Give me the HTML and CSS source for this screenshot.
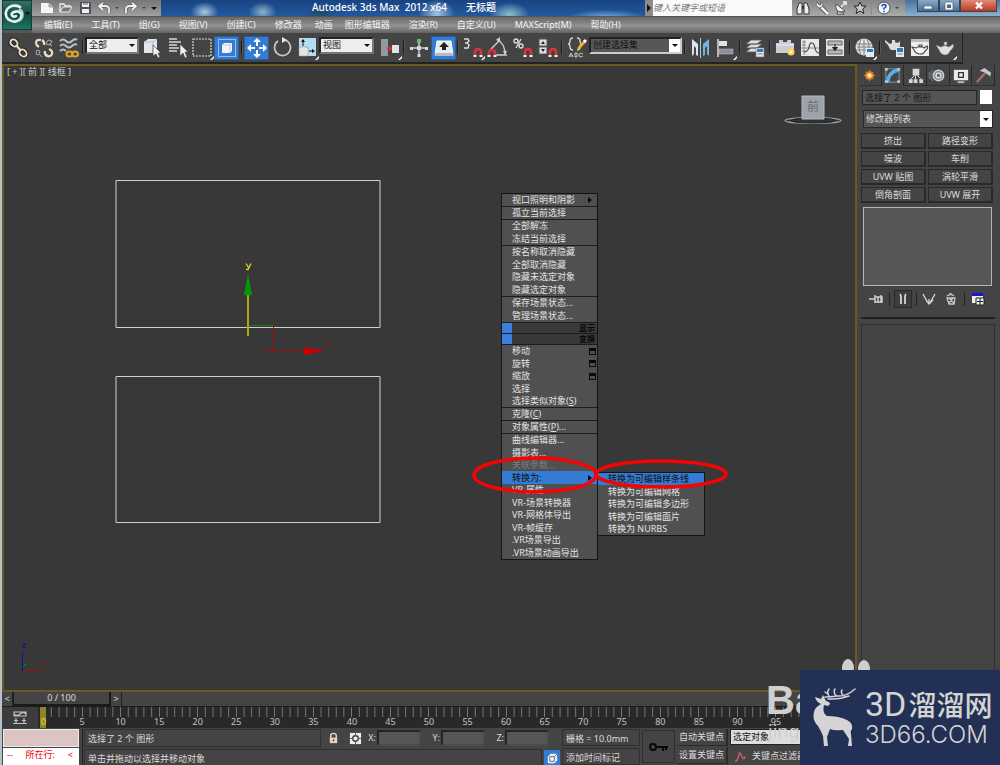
FILE: index.html
```html
<!DOCTYPE html>
<html lang="zh-CN">
<head>
<meta charset="utf-8">
<title>Autodesk 3ds Max 2012 x64 无标题</title>
<link rel="stylesheet" href="styles.css">
</head>
<body>
<div class="app">
  <header class="header">
    <button class="app-button" aria-label="应用程序">
      <svg width="30" height="30" viewBox="0 0 30 30"><path d="M18 7C9 3 3 9 4 15s10 9 14 4-1-9-6-7-1 6 2 4" fill="none" stroke="#e8f4ef" stroke-width="2.600" stroke-linecap="round"/><path d="M17 9c5 2 5 9 0 12" fill="none" stroke="#b9d8cf" stroke-width="2"/><path d="M23 12h5l-2.500 3z" fill="#111"/></svg>
    </button>
    <div class="title-row">
      <div class="quick">
        <button aria-label="新建"><svg width="14" height="12" viewBox="0 0 14 12"><path d="M1 1h8l4 4v6H1z" fill="#f4f4f4"/><path d="M9 1v4h4" fill="#bbb" stroke="#777" stroke-width=".6"/></svg></button>
        <button aria-label="打开"><svg width="14" height="12" viewBox="0 0 14 12"><path d="M1 10V2h4l1 2h5v2" fill="none" stroke="#eee" stroke-width="1.300"/><path d="M1 10l3-5h9l-3 5z" fill="#777" stroke="#eee"/></svg></button>
        <button aria-label="保存"><svg width="14" height="12" viewBox="0 0 14 12"><path d="M2 0h10l1 1v11H2z" fill="#4d5359"/><path d="M4 1h7v4H4zM4 7h7v4H4z" fill="#f1f1f1"/><path d="M5 2h5" stroke="#667"/></svg></button>
        <button class="wide" aria-label="撤消"><svg width="14" height="12" viewBox="0 0 14 12"><path d="M12 11V7q0-3-4-3H3M6 1L2 4l4 4" fill="none" stroke="#555" stroke-width="3"/><path d="M12 11V7q0-3-4-3H3M6 1L2 4l4 4" fill="none" stroke="#f2f2f2" stroke-width="1.800"/></svg><i class="caret dim"></i></button>
        <button class="wide" aria-label="重做"><svg width="14" height="12" viewBox="0 0 14 12"><path d="M2 11V7q0-3 4-3h5M8 1l4 3-4 4" fill="none" stroke="#555" stroke-width="3"/><path d="M2 11V7q0-3 4-3h5M8 1l4 3-4 4" fill="none" stroke="#f2f2f2" stroke-width="1.800"/></svg><i class="caret dim"></i></button>
        <button class="more" aria-label="自定义"><i class="caret"></i></button>
      </div>
      <h1 class="title"><span>Autodesk 3ds Max&nbsp; 2012 x64</span><span>无标题</span></h1>
      <div class="search"><button aria-label="展开"><svg width="8" height="10" viewBox="0 0 8 10"><path d="M2 1l4 4-4 4z" fill="#111"/></svg></button><input type="search" aria-label="搜索" placeholder="键入关键字或短语"></div>
      <div class="info">
        <button aria-label="查找"><svg width="14" height="14" viewBox="0 0 14 14"><path d="M3 2h3v11H1V8zM8 2h3l2 6v5H8z" fill="#eee" stroke="#333"/><path d="M6 5h2v3H6z" fill="#333"/></svg></button>
        <button aria-label="工具"><svg width="14" height="14" viewBox="0 0 14 14"><path d="M5 5l7 7" stroke="#333" stroke-width="4"/><path d="M5 5l7 7" stroke="#f5f5f5" stroke-width="2.600" stroke-linecap="round"/><path d="M2 1L1 4l3 3 3-1 1-3-2-2v3H4z" fill="#f5f5f5" stroke="#444" stroke-width=".6"/></svg></button>
        <button aria-label="通讯"><svg width="14" height="14" viewBox="0 0 14 14"><path d="M2 3l9 7q-6 3-8-1-2-3-1-6zM4 10l-1 3h7l-2-3" fill="#f0f0f0" stroke="#333" stroke-width=".8"/><path d="M7 6l4-4M9 1h3v3" stroke="#f0f0f0" stroke-width="1.500" fill="none"/></svg></button>
        <button aria-label="收藏"><svg width="14" height="14" viewBox="0 0 14 14"><path d="M7 1l1.800 4H13L9.700 8l1.200 4.500L7 10l-3.900 2.500L4.300 8 1 5h4.200z" fill="#ccc" stroke="#222"/></svg></button>
        <button class="help" aria-label="帮助"><svg width="14" height="14" viewBox="0 0 14 14"><circle cx="7" cy="7" r="6" fill="#f6f6f6" stroke="#456"/><path d="M5 5.500q0-2 2-2t2 1.700q0 1.200-2 2V8.500M7 9.800v1.400" stroke="#1745b5" stroke-width="1.500" fill="none"/></svg><i class="caret dim"></i></button>
      </div>
      <div class="window-buttons">
        <button aria-label="最小化"><svg width="12" height="8" viewBox="0 0 12 8"><path d="M2 4h8v3H2z" fill="#fff" stroke="#456" stroke-width=".6"/></svg></button><button aria-label="还原"><svg width="12" height="10" viewBox="0 0 12 10"><path d="M2 1h8v8H2z" fill="#f4f4f4" stroke="#456" stroke-width=".6"/><path d="M4.500 4h3v2.500h-3z" fill="#5b7a9c" stroke="#456"/></svg></button><button class="close" aria-label="关闭"><svg width="12" height="10" viewBox="0 0 12 10"><path d="M3 1.500l6 6M9 1.500l-6 6" stroke="#fff" stroke-width="2.400"/></svg></button>
      </div>
    </div>
    <nav class="menubar">
      <button>编辑(E)</button><button>工具(T)</button><button>组(G)</button><button>视图(V)</button><button>创建(C)</button><button>修改器</button><button class="near">动画</button><button class="near">图形编辑器</button><button>渲染(R)</button><button>自定义(U)</button><button>MAXScript(M)</button><button>帮助(H)</button>
    </nav>
  </header>

  <div class="toolbar">
    <button aria-label="选择并链接"><svg viewBox="0 0 24 24"><g fill="none" stroke="#222" stroke-width="4"><ellipse cx="7" cy="7" rx="4" ry="3" transform="rotate(45 7 7)"/><ellipse cx="16" cy="17" rx="4" ry="3" transform="rotate(45 16 17)"/></g><g fill="none" stroke="#e9dcc0" stroke-width="2"><ellipse cx="7" cy="7" rx="4" ry="3" transform="rotate(45 7 7)"/><ellipse cx="16" cy="17" rx="4" ry="3" transform="rotate(45 16 17)"/><path d="M9 9l5 6"/></g></svg></button>
    <button aria-label="断开链接"><svg viewBox="0 0 24 24"><g fill="none" stroke="#e9dcc0" stroke-width="2.200"><path d="M9 4q-5-1-5 3 0 2 3 4M12 9q1-3-2-5M14 19q4 3 6-1 1-3-3-5M13 15q-1 3 2 5"/></g><g stroke="#aaa" fill="none"><path d="M14 8l2-4 4 1-2 4zM5 14l3 1-1 4-3-1zM17 8l3 2M8 19l2 2"/></g></svg></button>
    <button aria-label="绑定到空间扭曲"><svg viewBox="0 0 24 24"><path d="M3 5q3-3 6 0t6 0 5-1M3 10q3-3 6 0t6 0 5-1M3 15q3-3 6 0" fill="none" stroke="#b9c1c8" stroke-width="2"/><g fill="none" stroke="#e5a52a" stroke-width="2"><ellipse cx="12.500" cy="18" rx="3" ry="2.500"/><ellipse cx="18" cy="18" rx="3" ry="2.500"/></g></svg></button>
    <i class="sep"></i>
    <span class="select filter"><select aria-label="选择过滤器"><option>全部</option></select></span>
    <button aria-label="选择对象"><svg viewBox="0 0 24 24"><path d="M4 6l4-3h9v10l-4 4H4z" fill="#dfe5ea"/><path d="M4 6h9v11M13 6l4-3" fill="none" stroke="#b5bdc4"/><path d="M13 9v11l3-2 2 4 2-1-2-4h3z" fill="#f3f3f3" stroke="#444" stroke-width=".7"/></svg></button>
    <button aria-label="按名称选择"><svg viewBox="0 0 24 24"><path d="M4 3h8M4 6h12M4 9h8M4 12h10M4 15h8" stroke="#d5d9dc" stroke-width="1.500"/><path d="M15 8v12l3-3 2 5 2-1-2-5h3z" fill="#f0f0f0" stroke="#444" stroke-width=".6"/></svg></button>
    <button aria-label="矩形选择区域"><svg viewBox="0 0 24 24"><path d="M3 3h18v17H3z" fill="none" stroke="#ddd" stroke-width="1.200" stroke-dasharray="2 1"/><path d="M20 24l4-4v2l-2 2z" fill="#fff"/></svg></button>
    <button class="on" aria-label="窗口/交叉"><svg viewBox="0 0 24 24"><path d="M3.500 3.500h17v17h-17z" fill="none" stroke="#fff" stroke-dasharray="1 1"/><path d="M7 9l2-2h8v8l-2 2H7z" fill="#f2f4f8"/><path d="M7 9h8v8M15 9l2-2" stroke="#c4cbd6" fill="none"/></svg></button>
    <i class="sep"></i>
    <button class="on" aria-label="选择并移动"><svg viewBox="0 0 24 24"><path d="M12 2l4 4h-3v4h-2V6H8zM12 22l4-4h-3v-4h-2v4H8zM2 12l4-4v3h4v2H6v3zM22 12l-4-4v3h-4v2h4v3z" fill="#fff"/></svg></button>
    <button aria-label="选择并旋转"><svg viewBox="0 0 24 24"><path d="M8 5a8 8 0 1 0 7-1" fill="none" stroke="#c9c9c9" stroke-width="1.600"/><path d="M12 1v6l5-3z" fill="#e8e8e8"/></svg></button>
    <button aria-label="选择并缩放"><svg viewBox="0 0 24 24"><path d="M4 2h17v18H4z" fill="#b4dcf4"/><path d="M4 11h9v9H4z" fill="#e4e4e4" stroke="#999" stroke-width=".6"/><path d="M8 10V5" stroke="#111"/><path d="M6 6l2-3 2 3zM17 13l3 2-3 2z" fill="#111"/><path d="M14 15h4" stroke="#111"/><path d="M20 24l4-4v2l-2 2z" fill="#fff"/></svg></button>
    <span class="select coord"><select aria-label="参考坐标系"><option>视图</option></select></span>
    <button aria-label="使用轴点中心"><svg viewBox="0 0 24 24"><path d="M3 3h7v17H3z" fill="#8f99a5"/><path d="M14 9h7v8h-7z" fill="#dfe3e8"/><path d="M9 12.500h5M11.500 10v5" stroke="#e52a22" stroke-width="1.800"/><path d="M20 24l4-4v2l-2 2z" fill="#fff"/></svg></button>
    <i class="sep"></i>
    <button aria-label="选择并操纵"><svg viewBox="0 0 24 24"><path d="M12 5v15M4 12h16" stroke="#ccd" stroke-width="1.500"/><path d="M10 10h4v4h-4zM3 11h3v3H3zM18 11h3v3h-3zM10.500 18h3v3h-3z" fill="#d3d9df"/><path d="M10 3h4v4h-4z" fill="#70b870"/></svg></button>
    <button class="on" aria-label="键盘快捷键覆盖"><svg viewBox="0 0 24 24"><path d="M5 5h14l2 14H3z" fill="#e9ecef" stroke="#fff"/><path d="M3 17h18v3H3z" fill="#b6bcc2"/><path d="M12 6l5 5h-3v3h-4v-3H7z" fill="#222"/></svg></button>
    <i class="sep"></i>
    <button aria-label="捕捉开关"><svg viewBox="0 0 24 24"><path d="M3 3h4l1 2-2 2 2 2-1 3H3M4 7h3" fill="none" stroke="#ddd" stroke-width="1.400"/><g fill="none"><path d="M14 20v-4q0-3 3-3t3 3v4" stroke="#d9343b" stroke-width="2.600"/><path d="M12.500 20h3M18.500 20h3" stroke="#eee" stroke-width="2"/></g><path d="M20 24l4-4v2l-2 2z" fill="#fff"/></svg></button>
    <button aria-label="角度捕捉"><svg viewBox="0 0 24 24"><path d="M5 13L14 4M11 3q8 5 8 15M9 19h12" fill="none" stroke="#cfd2d5" stroke-width="1.400"/><path d="M10 4l4-3v5zM17 15l2 4 2-4z" fill="#cfd2d5"/><path d="M3 20v-3q0-3 3-3t3 3v3" fill="none" stroke="#d9343b" stroke-width="2.600"/><path d="M1.500 20h3M7.500 20h3" stroke="#eee" stroke-width="2"/></svg></button>
    <button aria-label="百分比捕捉"><svg viewBox="0 0 24 24"><circle cx="5" cy="5" r="2" fill="none" stroke="#ddd" stroke-width="1.400"/><circle cx="10" cy="10" r="2" fill="none" stroke="#ddd" stroke-width="1.400"/><path d="M10 3L5 12" stroke="#ddd" stroke-width="1.300"/><path d="M14 20v-4q0-3 3-3t3 3v4" fill="none" stroke="#d9343b" stroke-width="2.600"/><path d="M12.500 20h3M18.500 20h3" stroke="#eee" stroke-width="2"/></svg></button>
    <button aria-label="微调器捕捉"><svg viewBox="0 0 24 24"><path d="M3 3h8v7H3zM3 11h8v7H3z" fill="#dde" stroke="#555"/><path d="M5 8l2-3 2 3zM5 13l2 3 2-3z" fill="#222"/><path d="M14 20v-4q0-3 3-3t3 3v4" fill="none" stroke="#d9343b" stroke-width="2.600"/><path d="M12.500 20h3M18.500 20h3" stroke="#eee" stroke-width="2"/></svg></button>
    <i class="sep"></i>
    <button aria-label="编辑命名选择集"><svg viewBox="0 0 24 24"><path d="M8 2q-3 0-3 3t-2 3q2 0 2 3t3 3M12 2q3 0 3 3t2 3q-2 0-2 3t-3 3" fill="none" stroke="#d5d5d5" stroke-width="1.300"/><path d="M12 14l1-3 6-7 2 2-6 7z" fill="#eead42"/><path d="M18 5l2-2 2 2-2 2z" fill="#fff"/><path d="M4 21l2-4 2 4M5 20h2M10 17v4h2v-4zM18 18q-4-2-4 1t4 1" fill="none" stroke="#ccc"/></svg></button>
    <span class="select sets"><select aria-label="命名选择集"><option>创建选择集</option></select></span>
    <i class="sep"></i>
    <button aria-label="镜像"><svg viewBox="0 0 24 24"><path d="M4 3l6 5v12l-2-1v-7l-2-2v8l-2 2z" fill="#e0e3e6"/><path d="M21 3l-6 5v12l2-1v-7l2-2v8l2 2z" fill="#71b3e1"/><path d="M12.500 2v20" stroke="#9cc"/></svg></button>
    <button aria-label="对齐"><svg viewBox="0 0 24 24"><path d="M5 3v18" stroke="#ddd" stroke-width="1.500"/><path d="M6 5h8v5H6z" fill="#dfe3e8"/><path d="M6 13h14v5H6z" fill="#8c9099" stroke="#bbb" stroke-width=".6"/><path d="M20 24l4-4v2l-2 2z" fill="#fff"/></svg></button>
    <i class="sep"></i>
    <button aria-label="层管理器"><svg viewBox="0 0 24 24"><path d="M3 8l5-4h11l-5 4zM3 12l5-4h11l-5 4zM3 16l5-4h11l-5 4z" fill="#dcdfe2" stroke="#555" stroke-width=".8"/><path d="M13 12h8v9h-8z" fill="#e4eaf0" stroke="#777" stroke-width=".6"/><path d="M14 13h6v3h-6z" fill="#3776b7"/><path d="M14.500 18h5" stroke="#777"/></svg></button>
    <i class="sep"></i>
    <button aria-label="石墨建模工具"><svg viewBox="0 0 24 24"><path d="M3 7h3V4h4v2h4V4h4v3h3v10H3z" fill="#c9ced6"/><path d="M3 9h18" stroke="#eef"/><circle cx="18" cy="16" r="3.500" fill="#ffcf55"/><circle cx="18" cy="16" r="1.500" fill="#fff6cf"/></svg></button>
    <button aria-label="曲线编辑器"><svg viewBox="0 0 24 24"><path d="M3 3h18v17H3z" fill="#e6e7e8"/><path d="M6 4v15M3 12h18M4 6h4M4 9h4M4 15h4" stroke="#888"/><path d="M6 16q4 0 5-5t3-4q2 0 3 5t4 5" fill="none" stroke="#444" stroke-width="1.200"/></svg></button>
    <button aria-label="图解视图"><svg viewBox="0 0 24 24"><path d="M3 3h18v17H3z" fill="#dfe2e5"/><path d="M5 5h14v4H5zM5 14h14v4H5z" fill="#b3b8bf" stroke="#666"/><path d="M12 8v6M9.500 11.500l2.500 3 2.500-3z" stroke="#222" fill="#222"/></svg></button>
    <i class="sep"></i>
    <button aria-label="材质编辑器"><svg viewBox="0 0 24 24"><circle cx="11" cy="11" r="8.500" fill="#e0e4e8"/><path d="M3 8h16M3 14h16M8 3q-4 8 0 16M14 3q4 8 0 16M11 2v18M4 11h15" stroke="#7a8087" fill="none" stroke-width="1"/><path d="M13 12h8v9h-8z" fill="#e4eaf0"/><path d="M14 13h6v3h-6z" fill="#3776b7"/><path d="M20 24l4-4v2l-2 2z" fill="#fff"/></svg></button>
    <i class="sep"></i>
    <button aria-label="渲染设置"><svg viewBox="0 0 24 24"><path d="M2 4l5 4q4-3 8-1l2-2v5q-2 4-5 4H8Q6 12 5 9L2 6z" fill="#d9dde1"/><path d="M9 4h3v3H9z" fill="#d9dde1"/><path d="M13 11h8v10h-8z" fill="#e4eaf0"/><path d="M14 12h6v4h-6z" fill="#3776b7"/><path d="M14.500 18h5" stroke="#777"/></svg></button>
    <button aria-label="渲染帧窗口"><svg viewBox="0 0 24 24"><path d="M3 3h18v17H3z" fill="#eceded"/><path d="M3 3h18v3H3z" fill="#b5babf"/><path d="M4 11l4 1q4-3 8 0l3-2q2 2-2 5-1 3-5 3-4 0-6-4zM11 9h3v2h-3z" fill="#f8f8f8" stroke="#444" stroke-width="1.100"/></svg></button>
    <button aria-label="渲染产品"><svg viewBox="0 0 24 24"><path d="M3 9l5 2q4-3 8 0l4-3q2 3-3 7-1 4-5 4-4 0-6-5zM11 6h3v3h-3z" fill="#dde0e3" stroke="#777" stroke-width=".6"/><path d="M20 24l4-4v2l-2 2z" fill="#fff"/></svg></button>
  </div>

  <main class="main">
    <section class="viewport" aria-label="前视口">
      <svg class="scene" width="851" height="624" viewBox="4 66 851 624">
        <g fill="none" stroke="#d0d0d0"><path d="M116 180.500H380V327.500H116zM116 376.500H380V522.500H116z"/></g>
        <path d="M248 325.500H273.500" stroke="#137b13"/><path d="M273.500 326V351M263 350.500H304" stroke="#9e1111" fill="none"/>
        <path d="M304 347l21 4-21 4z" fill="#c80000"/>
        <path d="M248 295V336" stroke="#aaa719" stroke-width="2"/><path d="M248 274l4 21h-8z" fill="#009b00"/>
        <path d="M246 263.500l2.500 4M251 263.500l-3 6h-2" stroke="#d4cf20" stroke-width="1.400" fill="none"/>
        <path d="M325 342l4 4M329 342l-4 4" stroke="#9e1111" fill="none"/>
        <path d="M22.500 652V671" stroke="#1010a8"/><path d="M23 670.500H42" stroke="#9e1111"/>
        <path d="M22.500 643.500h3l-3 4h3" stroke="#1010a8" fill="none"/><path d="M23 663l2 2 2-2M25 665l-2 2" stroke="#137b13" fill="none"/><path d="M42 662l3 4M45 662l-3 4" stroke="#9e1111"/>
        <ellipse cx="813" cy="120.500" rx="28" ry="3" fill="#303234" stroke="#9ba2a8" stroke-width="1.200"/>
        <ellipse cx="813" cy="120.500" rx="22" ry="2.500" fill="none" stroke="#222"/>
        <path d="M802 96h22v23h-22z" fill="#9da2aa" stroke="#b5babf"/>
      </svg>
      <div class="view-label">[ + ][ 前 ][ 线框 ]</div>
      <div class="view-cube">前</div>
      <div class="quad">
        <ul><li><button>视口照明和阴影<i class="arrow"></i></button></li></ul>
        <ul><li><button>孤立当前选择</button></li></ul>
        <ul><li><button>全部解冻</button></li><li><button>冻结当前选择</button></li></ul>
        <ul><li><button>按名称取消隐藏</button></li><li><button>全部取消隐藏</button></li><li><button>隐藏未选定对象</button></li><li><button>隐藏选定对象</button></li></ul>
        <ul><li><button>保存场景状态...</button></li><li><button>管理场景状态...</button></li></ul>
        <h2>显示</h2>
        <h2>变换</h2>
        <ul><li><button>移动<i class="box"></i></button></li><li><button>旋转<i class="box"></i></button></li><li><button>缩放<i class="box"></i></button></li><li><button>选择</button></li><li><button>选择类似对象(<u>S</u>)</button></li></ul>
        <ul><li><button>克隆(<u>C</u>)</button></li></ul>
        <ul><li><button>对象属性(<u>P</u>)...</button></li></ul>
        <ul><li><button>曲线编辑器...</button></li><li><button>摄影表...</button></li><li><button disabled>关联参数...</button></li><li><button class="active">转换为:<i class="arrow"></i></button></li><li><button>VR-属性</button></li><li><button>VR-场景转换器</button></li><li><button>VR-网格体导出</button></li><li><button>VR-帧缓存</button></li><li><button>.VR场景导出</button></li><li><button>.VR场景动画导出</button></li></ul>
      </div>
      <div class="quad submenu">
        <ul><li><button class="active">转换为可编辑样条线</button></li><li><button>转换为可编辑网格</button></li><li><button>转换为可编辑多边形</button></li><li><button>转换为可编辑面片</button></li><li><button>转换为 NURBS</button></li></ul>
      </div>
      <svg class="marks" width="260" height="44" viewBox="470 454 260 44"><g fill="none" stroke="#f60303" stroke-width="3.500"><ellipse cx="535" cy="475" rx="61" ry="17"/><ellipse cx="661" cy="474" rx="65" ry="13"/></g></svg>
    </section>

    <aside class="panel">
      <div class="tabs">
        <button aria-label="创建"><svg viewBox="0 0 20 20"><circle cx="10" cy="10" r="5" fill="#b0622c"/><path d="M10 4v12M4 10h12M6 6l8 8M14 6l-8 8" stroke="#d97a2c"/><circle cx="10" cy="10" r="3.500" fill="#f0a040"/><circle cx="10" cy="10" r="2" fill="#fff0a0"/></svg></button>
        <button class="on" aria-label="修改"><svg viewBox="0 0 20 20"><path d="M3 3h14v14H3z" fill="none" stroke="#8a98a4"/><path d="M5 17Q5 7 16 4" fill="none" stroke="#58aee8" stroke-width="4"/><path d="M2 2h3v3H2zM15 2h3v3h-3zM2 15h3v3H2zM15 15h3v3h-3z" fill="#b9c6d0"/></svg></button>
        <button aria-label="层次"><svg viewBox="0 0 20 20"><path d="M7 3h7v7H7zM3 14h4v4H3zM8 14h4v4H8zM14 14h4v4h-4z" fill="#d4d6da"/><path d="M10 10v4M5 14l4-4M16 14l-4-4" stroke="#d4d6da"/></svg></button>
        <button aria-label="运动"><svg viewBox="0 0 20 20"><circle cx="11" cy="10" r="5.500" fill="#858b91" stroke="#c9cfd4" stroke-width="1.500"/><circle cx="11" cy="10" r="2.500" fill="#666" stroke="#dde1e4" stroke-width="1.500"/><path d="M5 4q-4 6 0 12M2 6q-2 4 0 8" fill="none" stroke="#777d83"/></svg></button>
        <button aria-label="显示"><svg viewBox="0 0 20 20"><path d="M3 4h15v11H3z" fill="#e9eaec"/><path d="M8 7h5v5H8z" fill="none" stroke="#333" stroke-width="1.400"/><path d="M7 16h7v2H7z" fill="#bbb"/></svg></button>
        <button aria-label="实用程序"><svg viewBox="0 0 20 20"><path d="M3 17L13 6" stroke="#a36d63" stroke-width="2.500"/><path d="M6 5l5-3 7 5-1 4-5-4z" fill="#c3c8cd"/></svg></button>
      </div>
      <div class="name-row"><input class="name" aria-label="对象名称" value="选择了 2 个 图形"><button class="swatch" aria-label="对象颜色"></button></div>
      <span class="select modifiers"><select aria-label="修改器列表"><option>修改器列表</option></select></span>
      <div class="mod-grid"><button>挤出</button><button>路径变形</button><button>噪波</button><button>车削</button><button>UVW 贴图</button><button>涡轮平滑</button><button>倒角剖面</button><button>UVW 展开</button></div>
      <div class="stack"></div>
      <div class="stack-tools">
        <button aria-label="锁定堆栈"><svg viewBox="0 0 16 16"><path d="M1 8h6M7 4v8M7 6h7v5H7zM10 6v5M13 4v8" fill="none" stroke="#d0d0d0" stroke-width="1.500"/></svg></button><i></i>
        <button class="on" aria-label="显示最终结果"><svg viewBox="0 0 16 16"><path d="M5 3q1 1 1 3v7M11 3q-1 1-1 3v7" fill="none" stroke="#ddd" stroke-width="1.700"/></svg></button><i></i>
        <button aria-label="使唯一"><svg viewBox="0 0 16 16"><path d="M2 3l5 9M14 3L9 12M8 8v5M5 9l3 4 4-4" fill="none" stroke="#d8d8d8" stroke-width="1.300"/></svg></button>
        <button aria-label="移除修改器"><svg viewBox="0 0 16 16"><path d="M4 5q4-3 7 0M4 7h8l-1 6H6zM6 7l5 5M10 7l-4 5M7 2l2 2" fill="none" stroke="#c8c8c8" stroke-width="1.300"/></svg></button><i></i>
        <button aria-label="配置修改器集"><svg viewBox="0 0 16 16"><path d="M2 2h11v10H2z" fill="#eee"/><path d="M2 2h11v3H2z" fill="#1616d3"/><path d="M6 7h8v7H6z" fill="#eee" stroke="#222"/><path d="M10 7v7M7 10.500h6" stroke="#222"/></svg></button>
      </div>
      <div class="rollout"></div>
    </aside>
  </main>

  <div class="time-slider"><button aria-label="上一帧">&lt;</button><button class="thumb">0 / 100</button><button aria-label="下一帧">&gt;</button></div>
  <div class="track">
    <button class="curve" aria-label="打开迷你曲线编辑器"><svg width="16" height="14" viewBox="0 0 16 14"><path d="M2 1h12v4H2zM2 3q3 3 6 0t6 0M1 12.500h14M4 7v5M12 7v5M2 9.500h4M10 9.500h4" fill="none" stroke="#c0c0c0" stroke-width="1.200"/></svg></button>
    <div class="ruler">
      <div class="current"><span>0</span></div><div><span>5</span></div><div><span>10</span></div><div><span>15</span></div><div><span>20</span></div><div><span>25</span></div><div><span>30</span></div><div><span>35</span></div><div><span>40</span></div><div><span>45</span></div><div><span>50</span></div><div><span>55</span></div><div><span>60</span></div><div><span>65</span></div><div><span>70</span></div><div><span>75</span></div><div><span>80</span></div><div><span>85</span></div><div><span>90</span></div><div><span>95</span></div>
    </div>
  </div>

  <footer class="status">
    <div class="listener"><input class="macro" aria-label="宏录制器"><div class="script-line"><span>--</span><span>所在行:</span><span>&lt;</span></div></div>
    <div class="info-area">
      <div class="line coords">
        <output class="field grow">选择了 2 个 图形</output>
        <button class="mini" aria-label="选择锁定"><svg viewBox="0 0 14 14"><path d="M4 7V4q0-2.500 3-2.500T10 4v3" fill="none" stroke="#ddd" stroke-width="1.500"/><path d="M3 6h8v6H3z" fill="#e8d5b5"/><path d="M7 8v2" stroke="#333" stroke-width="1.500"/></svg></button>
        <button class="mini" aria-label="绝对模式"><svg viewBox="0 0 14 14"><path d="M1 1h12v12H1z" fill="#ececec"/><circle cx="7" cy="7" r="3" fill="none" stroke="#444" stroke-width="1.500"/><path d="M7 1v3M7 10v3M1 7h3M10 7h3" stroke="#555"/></svg></button>
        <label>X:<input aria-label="X"></label><label>Y:<input aria-label="Y"></label><label>Z:<input aria-label="Z"></label>
      </div>
      <div class="line"><output class="field grow">单击并拖动以选择并移动对象</output><button class="comm" aria-label="自适应降级"><svg viewBox="0 0 14 14"><path d="M2 5l3-3h7v7l-3 3H2z" fill="#f4f6fa"/><path d="M4 5h5v5H4zM9 5l3-3" fill="none" stroke="#536478"/></svg></button></div>
    </div>
    <div class="grid-info"><output class="field">栅格 = 10.0mm</output><button class="field">添加时间标记</button></div>
    <button class="key" aria-label="设置关键点"><svg width="20" height="12" viewBox="0 0 20 12"><circle cx="4" cy="6" r="3" fill="none" stroke="#080808" stroke-width="2"/><path d="M7 6h12M14 6v4M17 6v3" stroke="#080808" stroke-width="2"/></svg></button>
    <div class="keys"><button>自动关键点</button><button>设置关键点</button></div>
    <div class="filters">
      <select class="plain" aria-label="关键点对象"><option>选定对象</option></select>
      <div class="filter-row"><button class="mini" aria-label="切线"><svg viewBox="0 0 14 14"><path d="M1 12q3 0 4-6t3 0 4 1" fill="none" stroke="#e06060" stroke-width="1.500"/><path d="M3 2l4 1M8 11l4-1" stroke="#44c"/></svg></button><button class="key-filter">关键点过滤器...</button></div>
    </div>
  </footer>

  <div class="watermark"><svg width="30" height="22" viewBox="0 0 30 22"><ellipse cx="7" cy="10" rx="6" ry="9"/><ellipse cx="23" cy="11" rx="6" ry="9"/></svg><b>Ba</b><span>jing</span></div>
  <div class="brand">
    <svg width="46" height="60" viewBox="0 0 46 60"><path d="M2 9l6 2 2-4 3 6q4 1 4 3l-2 2-4-1q-2 8 3 11 12 0 20 4 6 3 5 9-2 2-1 5l1 12h-4l1-7-6-9q-9 1-13-1l-3 8 1 9h-4l-1-10Q8 43 5 38q-6-6-4-14 1-5 7-8-5-2-6-7z" fill="#d4d4d4"/><path d="M12 9q6 0 12-1 9 1 18-7M17 9q-4-4-1-8M15 6l-3-2M23 8q-3-4-1-7M31 8q-4-3-2-6M15 11q9 0 14-1l7-2" fill="none" stroke="#d4d4d4" stroke-width="1.500" stroke-linecap="round"/></svg>
    <div class="brand-text"><div class="brand-name"><span>3D</span>溜溜网</div><div class="brand-url">3D66.COM</div></div>
  </div>
</div>
</body>
</html>
```
FILE: styles.css
```css
* { box-sizing: border-box; }
body { margin: 0; }
.app, button, input, select { font-family: "Noto Sans", "Noto Sans CJK SC", sans-serif; font-size: 9px; line-height: 12px; color: #dcdcdc; }
button, input, select { margin: 0; padding: 0; border: 0; background: none; border-radius: 0; white-space: nowrap; }
button { display: flex; align-items: center; justify-content: center; }
select { appearance: none; width: 100%; }
ul { margin: 0; padding: 0; list-style: none; }
svg { display: block; flex: none; }
.app { position: relative; display: flex; flex-direction: column; height: 100vh; overflow: hidden; background: #444; border-left: 2px solid #b9c2ca; }

/* title and menus */
.header { display: grid; grid-template-columns: 30px 1fr; grid-template-rows: 16px 17px; flex: none; background: #555; }
.app-button { grid-row: 1 / 3; height: 30px; background: linear-gradient(#356e68, #0d4f49 50%, #247265); border: 1px solid #163e39; }
.title-row { display: flex; min-width: 0; background: linear-gradient(#919191, #b0b0b0); }
.quick { display: flex; align-items: center; width: 129px; padding-left: 5px; background: linear-gradient(#777, #a0a0a0); }
.quick button { width: 19px; }
.quick .wide { width: 27px; gap: 4px; }
.quick .more { width: 12px; }
.caret { border: 3px solid transparent; border-top-color: #111; border-bottom: 0; }
.caret.dim { border-width: 2px 2px 0; border-top-color: #444; }
.title { display: flex; flex: 1; gap: 19px; margin: 0; padding-left: 151px; font-size: 10px; line-height: 15px; font-weight: 500; color: #fff; white-space: nowrap; overflow: hidden;
  background: radial-gradient(14px 10px at 9% 75%, #a9c7dc, transparent), radial-gradient(14px 10px at 21% 75%, #8db3cc, transparent), radial-gradient(16px 10px at 33% 75%, #1f4a66, transparent), radial-gradient(18px 14px at 57% 85%, #a5c4e4, transparent), radial-gradient(20px 12px at 72% 90%, #8fbccb, transparent), radial-gradient(40px 8px at 92% 110%, #79abd9, transparent), linear-gradient(#194483, #22589d); }
.search { display: flex; width: 147px; background: #fafafa; }
.search button { width: 8px; background: #8b8b8b; }
.search input { flex: 1; min-width: 0; color: #777; }
.search input::placeholder { color: #777; font-style: italic; opacity: 1; }
.info { display: flex; align-items: center; width: 113px; padding-left: 1px; background: linear-gradient(#858585, #aaa); }
.info button { width: 19px; }
.info .help { width: 32px; gap: 4px; margin-left: 2px; border-left: 1px solid #888; }
.window-buttons { display: flex; width: 95px; height: 16px; padding: 0 3px 4px 12px; background: linear-gradient(#45749f, #8eb0cb); }
.window-buttons button { flex: 1; background: linear-gradient(#8ba9c5, #496e97); border: 1px solid #33455c; border-top: 0; }
.window-buttons .close { flex: 0 0 37px; background: linear-gradient(#df8b79, #bd3820); }
.menubar { display: flex; align-items: center; gap: 19px; padding-left: 12px; border-top: 1px solid #555; background: linear-gradient(#686868, #929292 55%, #646464); }
.menubar button { color: #f4f4f4; }
.menubar .near { margin-left: -6px; }
.menubar .near + .near { margin-left: -7px; }

/* main toolbar */
.toolbar { display: flex; align-items: center; flex: none; height: 31px; margin-right: 37px; padding-left: 4px; border: solid #222; border-width: 0 1px 2px 0; }
.toolbar svg { width: 24px; height: 24px; }
.toolbar button { width: 25px; height: 24px; flex: none; }
.toolbar .on { background: #347bd4; border: 1px solid #285c9d; }
.sep { width: 1px; height: 13px; flex: none; margin: 0 2px 0 1px; background: #191919; box-shadow: 1px 0 #555; }
.sets ~ .sep, .filter ~ .sep:nth-of-type(2) { margin: 0 2px; }
.select { position: relative; display: block; flex: none; height: 17px; margin-bottom: 5px; background: #eee; border: 2px inset #777; }
.select::after { content: ""; position: absolute; right: 2px; top: 5px; border: 3px solid transparent; border-top-color: #111; border-bottom: 0; }
.select select { height: 13px; padding-left: 2px; color: #111; }
.filter { width: 54px; }
.coord { width: 55px; margin-right: 3px; }
.sets { width: 93px; background: linear-gradient(to left, #fff 11px, #575757 11px); border: 2px solid #222; border-color: #222 #ccc #ccc #222; }

/* viewport */
.main { display: flex; flex: 1; min-height: 0; }
.viewport { position: relative; flex: 1; min-width: 0; overflow: hidden; background: #383838; border: 2px solid #6c5a25; }
.scene { position: absolute; left: 0; top: 0; }
.view-label { position: absolute; left: 3px; top: 0; color: #ccc; white-space: pre; word-spacing: normal; }
.view-cube { position: absolute; left: 803px; top: 35px; font-size: 12px; color: #666b75; }
.quad { position: absolute; left: 497px; top: 127px; width: 97px; border: 1px solid #151515; background: #505050; }
.submenu { left: 593px; top: 406px; width: 108px; }
.quad > * + * { border-top: 1px solid #1d1d1d; }
.quad button { width: 100%; height: 12px; padding: 0 1px 0 10px; justify-content: flex-start; color: #e3e3e3; }
.quad li:nth-child(even) button { height: 13px; }
.quad .active { background: #347bd4; color: #101010; }
.quad button:disabled { color: #7c7c7c; }
.quad h2 { margin: 0; padding-right: 2px; font-size: 8px; line-height: 10px; text-align: right; color: #080808; background: linear-gradient(to right, #3c80df 10px, #393939 10px); }
.arrow { margin: 0 4px 0 auto; border: 3px solid transparent; border-left: 4px solid #080808; border-right: 0; }
.box { width: 7px; height: 7px; margin-left: auto; border: 1px solid #090909; border-top-width: 3px; }
.marks { position: absolute; left: 466px; top: 388px; }

/* command panel */
.panel { display: flex; flex-direction: column; flex: none; width: 143px; padding: 1px 5px 0 4px; background: #444; }
.tabs { display: flex; height: 21px; margin-left: -2px; }
.tabs button { flex: 1; border-right: 1px solid #292929; border-bottom: 1px solid #303030; }
.tabs .on { border-bottom: 0; }
.tabs svg { width: 19px; height: 19px; }
.name-row { display: flex; gap: 3px; margin: 4px 3px 0 1px; }
.name { flex: 1; min-width: 0; height: 15px; padding-left: 2px; color: #151515; background: #555; border: 1px solid #252525; }
.swatch { width: 12px; height: 14px; background: #fff; }
.modifiers { margin: 5px 2px 0 2px; height: 18px; background: linear-gradient(to left, #fff 12px, #555 12px); border: 1px solid #282828; }
.modifiers select { height: 16px; color: #ddd; }
.modifiers::after { top: 7px; right: 3px; }
.mod-grid { display: grid; grid-template-columns: 1fr 1fr; gap: 2px; margin: 5px 2px 0 0; }
.mod-grid button { height: 16px; border: solid #292929; border-width: 1px 2px 2px 1px; }
.stack { height: 79px; margin: 4px 3px 0 2px; border: 1px solid #b5b5b5; background: #565656; }
.stack-tools { display: flex; align-items: center; justify-content: space-between; height: 22px; margin-top: 2px; padding: 0 8px 0 6px; }
.stack-tools button { width: 18px; height: 18px; }
.stack-tools svg { width: 16px; height: 16px; }
.stack-tools .on { border: 1px solid #292929; background: #3d3d3d; }
.stack-tools i { width: 1px; height: 13px; background: #242424; }
.rollout { position: relative; flex: 1; margin-top: 14px; border: 1px solid #2e2e2e; border-bottom: 0; box-shadow: 0 -5px #444, 0 -7px #202020; }

/* time controls */
.time-slider { display: flex; flex: none; height: 14px; }
.time-slider button { width: 11px; border-right: 1px solid #222; }
.time-slider .thumb { width: 98px; border: solid #191919; border-width: 0 2px 2px 1px; }
.track { display: flex; flex: none; height: 22px; border-top: 1px solid #1b1b1b; background: #292929; }
.track .curve { width: 36px; background: #3c3c3c; }
.ruler { display: grid; grid-template-columns: repeat(20, 1fr); flex: 1; margin: 0 186px 0 5px; }
.ruler div { display: flex; align-items: flex-end; background: linear-gradient(to right, #777 1px, transparent 1px) 0 0 / 20% 10px repeat-x; }
.ruler span { display: flex; justify-content: center; width: 1px; line-height: 12px; color: #c4c4c4; }
.ruler .current { background: linear-gradient(to right, #8f8623 3px, transparent 3px) 0 0 / 100% 100% no-repeat, linear-gradient(to right, #777 1px, transparent 1px) 0 0 / 20% 10px repeat-x; box-shadow: -3px 0 #8f8623; }
.ruler .current span { color: #e5df50; }

/* status bar */
.status { display: flex; flex: none; height: 37px; padding: 1px 0 0 1px; background: #444; }
.listener { display: flex; flex-direction: column; gap: 1px; width: 76px; }
.listener .macro { height: 18px; background: #dcc3c4; border: 1px solid #eee; }
.script-line { display: flex; justify-content: space-between; flex: 1; padding: 1px 6px 0 4px; background: #fff; color: #f00000; }
.info-area { display: flex; flex-direction: column; gap: 2px; width: 478px; margin-left: 3px; padding-left: 1px; border-left: 1px solid #222; }
.line { display: flex; align-items: center; gap: 2px; height: 18px; }
.coords { padding-right: 11px; }
.field { display: block; height: 18px; padding: 3px 3px 0; border: 1px solid #303030; white-space: nowrap; text-align: left; }
.grow { flex: 1; }
.mini { width: 20px; height: 16px; flex: none; }
.mini svg, .comm svg { width: 13px; height: 13px; }
.line label { display: flex; align-items: center; justify-content: flex-end; width: 62px; gap: 1px; }
.line label:first-of-type { width: 54px; }
.line label input { width: 44px; height: 16px; background: #565656; border: 2px solid #252525; border-right-color: #4b4b4b; border-bottom-color: #4b4b4b; }
.comm { width: 16px; height: 16px; background: #347bd4; }
.grid-info { display: flex; flex-direction: column; gap: 2px; width: 78px; margin-left: 2px; }
.key { width: 33px; margin: 1px 0 2px 2px; border: 1px solid #303030; }
.keys { display: flex; flex-direction: column; gap: 1px; width: 51px; margin-left: 2px; }
.keys button { height: 17px; border: solid #2b2b2b; border-width: 0 2px 1px 0; }
.filters { flex: 1; min-width: 0; margin-left: 2px; }
.filters .plain { display: block; height: 16px; padding-left: 2px; background: #ddd; color: #101010; border: 1px solid #222; }
.filter-row { display: flex; align-items: center; height: 18px; margin-top: 2px; }
.filter-row .key-filter { margin-left: 2px; }

/* marks over the window */
.watermark { position: absolute; right: 129px; bottom: 21px; width: 105px; height: 86px; color: #cfcfcf; }
.watermark svg { margin-left: 75px; fill: #cfcfcf; }
.watermark b, .watermark span { display: block; }
.watermark b { font-family: "Liberation Sans", sans-serif; font-size: 40px; line-height: 40px; }
.watermark span { padding-left: 2px; font-family: "Noto Sans", sans-serif; font-size: 18px; line-height: 22px; }
.brand { position: absolute; right: 0; bottom: 0; display: flex; align-items: center; gap: 6px; width: 200px; height: 95px; padding-left: 13px; background: #233055; color: #d4d4d4; }
.brand-text { padding-bottom: 1px; }
.brand-name { display: flex; align-items: center; gap: 2px; font-family: "Noto Sans CJK SC", sans-serif; font-size: 28px; line-height: 36px; font-weight: 500; white-space: nowrap; }
.brand-name span { font-family: Roboto, sans-serif; font-size: 34px; font-weight: 400; }
.brand-url { font-family: Inter, sans-serif; font-size: 24px; line-height: 26px; font-weight: 300; white-space: nowrap; }
```
